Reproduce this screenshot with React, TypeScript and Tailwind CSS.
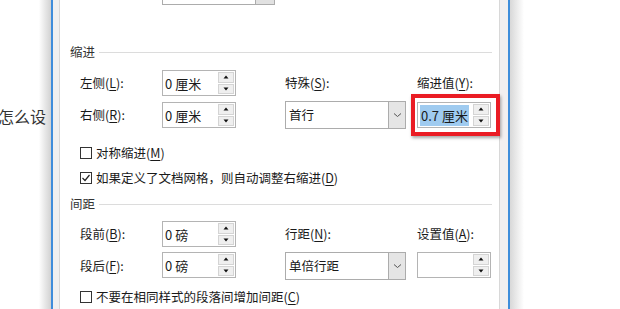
import type { ReactNode } from "react";

const Key = ({ k }: { k: string }) => <span className="underline underline-offset-2 decoration-1">{k}</span>;

function Arrows() {
  return (
    <div className="flex flex-col gap-[1px] w-[16px] h-full py-[1px] mr-[1px]">
      <div className="flex-1 flex items-center justify-center bg-[#efefef] border border-[#d4d4d4]">
        <svg width="6" height="4" viewBox="0 0 6 4"><path d="M3 0.5 L5.5 3.5 H0.5 Z" fill="#111" /></svg>
      </div>
      <div className="flex-1 flex items-center justify-center bg-[#efefef] border border-[#d4d4d4]">
        <svg width="6" height="4" viewBox="0 0 6 4"><path d="M0.5 0.5 H5.5 L3 3.5 Z" fill="#111" /></svg>
      </div>
    </div>
  );
}

function SpinBox({ children }: { children?: ReactNode }) {
  return (
    <div className="flex items-center w-[74px] h-[26px] border border-[#b4b4b4] bg-white">
      <div className="flex-1 pl-[2px] text-[13px] leading-none text-[#1a1a1a]">{children}</div>
      <Arrows />
    </div>
  );
}

function Dropdown({ value }: { value: string }) {
  return (
    <div className="flex w-[121px] h-[28px] border border-[#acacac] bg-white">
      <div className="flex-1 flex items-center pl-[3px] text-[12.5px] text-[#1a1a1a]">{value}</div>
      <div className="w-[17px] flex items-center justify-center bg-[#e5e5e5] border-l border-[#acacac]">
        <svg width="9" height="6" viewBox="0 0 9 6"><path d="M1 1.5 L4.5 4.5 L8 1.5" fill="none" stroke="#555" strokeWidth="1" /></svg>
      </div>
    </div>
  );
}

function Header({ title, className }: { title: string; className: string }) {
  return (
    <div className={`flex items-center h-[14px] pl-[10px] pr-[7px] ${className}`}>
      <span className="text-[12.5px] text-[#333]">{title}</span>
      <div className="flex-1 h-px bg-[#dcdcdc] ml-[4px]" />
    </div>
  );
}

function Check({ checked, children, className }: { checked?: boolean; children: ReactNode; className: string }) {
  return (
    <div className={`flex items-center h-[18px] pl-[20px] ${className}`}>
      <div className="w-[12px] h-[12px] border border-[#333] bg-white flex items-center justify-center">
        {checked && (
          <svg width="10" height="10" viewBox="0 0 10 10"><path d="M1.5 5 L4 7.5 L8.5 2" fill="none" stroke="#222" strokeWidth="1.2" /></svg>
        )}
      </div>
      <span className="ml-[4px] text-[12.5px] text-[#1a1a1a]">{children}</span>
    </div>
  );
}

const Label = ({ children, w }: { children: ReactNode; w: string }) => (
  <div className={`${w} text-[12.5px] text-[#1a1a1a]`}>{children}</div>
);

export default function App() {
  return (
    <div className="flex h-[309px] w-[620px] overflow-hidden bg-white font-['Noto_Sans_CJK_SC',sans-serif]">
      <div className="w-[51px] shrink-0 bg-linear-to-r from-white from-[76%] to-[#d2d2d2] pt-[104px]">
        <p className="-ml-[2px] text-[16px] whitespace-nowrap text-[#333]">怎么设</p>
      </div>
      <div className="w-[2px] shrink-0 bg-[#3f8ddb]" />
      <div className="w-[7px] shrink-0 bg-[#f0f0f0] border-r border-[#d8d8d8]" />

      <div className="w-[440px] shrink-0 flex flex-col border-r border-[#d8d8d8] bg-white">
        <div className="ml-[102px] w-[113px] h-[5px] flex border-x border-b border-[#acacac]">
          <div className="flex-1" />
          <div className="w-[19px] bg-[#e1e1e1] border-l border-[#acacac]" />
        </div>

        <Header title="缩进" className="mt-[40px]" />

        <div className="flex items-center h-[26px] mt-[11px] pl-[20px]">
          <Label w="w-[82px]">左侧(<Key k="L" />):</Label>
          <SpinBox>0 厘米</SpinBox>
          <Label w="w-[121px] ml-[49px]">特殊(<Key k="S" />):</Label>
          <Label w="w-[74px] ml-[11px]">缩进值(<Key k="Y" />):</Label>
        </div>

        <div className="flex items-center h-[28px] mt-[5px] pl-[20px]">
          <Label w="w-[82px]">右侧(<Key k="R" />):</Label>
          <SpinBox>0 厘米</SpinBox>
          <div className="ml-[49px]">
            <Dropdown value="首行" />
          </div>
          <div className="relative ml-[11px]">
            <SpinBox>
              <span className="inline-block bg-[#9fcbf0] px-[1px] py-[4px]">0.7 厘米</span>
            </SpinBox>
            <div className="absolute -left-[6px] -right-[9px] -top-[8px] -bottom-[8px] border-[4px] border-[#ea1c24] shadow-[1px_2px_3px_rgba(0,0,0,0.35)]" />
          </div>
        </div>

        <Check className="mt-[15px]">对称缩进(<Key k="M" />)</Check>
        <Check checked className="mt-[7px]">如果定义了文档网格，则自动调整右缩进(<Key k="D" />)</Check>

        <Header title="间距" className="mt-[10px]" />

        <div className="flex items-center h-[26px] mt-[10px] pl-[20px]">
          <Label w="w-[82px]">段前(<Key k="B" />):</Label>
          <SpinBox>0 磅</SpinBox>
          <Label w="w-[121px] ml-[49px]">行距(<Key k="N" />):</Label>
          <Label w="w-[74px] ml-[11px]">设置值(<Key k="A" />):</Label>
        </div>

        <div className="flex items-start h-[28px] mt-[5px] pl-[20px]">
          <Label w="w-[82px] self-center">段后(<Key k="F" />):</Label>
          <SpinBox>0 磅</SpinBox>
          <div className="ml-[49px]">
            <Dropdown value="单倍行距" />
          </div>
          <div className="ml-[11px]">
            <SpinBox />
          </div>
        </div>

        <Check className="mt-[8px]">不要在相同样式的段落间增加间距(<Key k="C" />)</Check>
      </div>

      <div className="w-[8px] shrink-0 bg-[#f2eff0]" />
      <div className="w-[2px] shrink-0 bg-[#3f8ddb]" />
      <div className="w-[14px] shrink-0 bg-linear-to-r from-[#d8d8d8] to-white" />
      <div className="flex-1 bg-white" />
    </div>
  );
}
